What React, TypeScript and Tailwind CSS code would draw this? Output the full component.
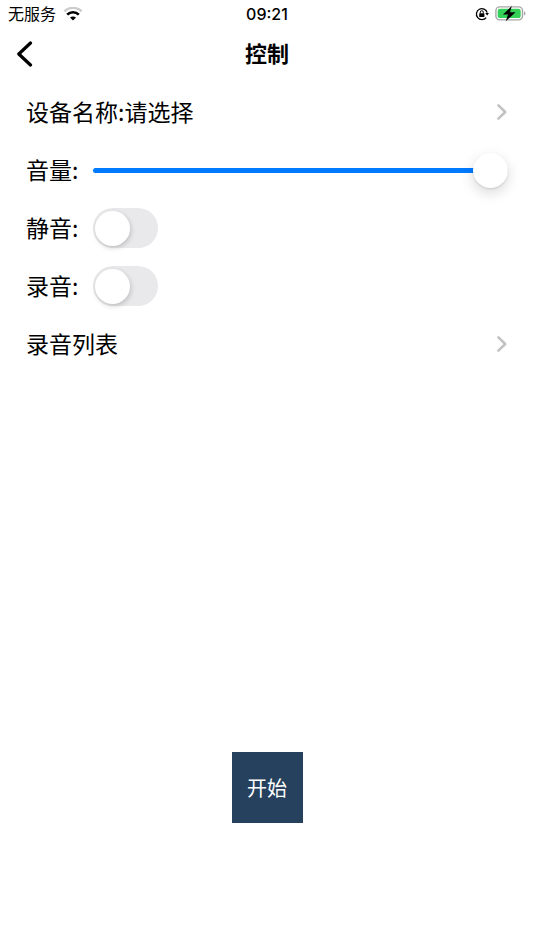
import { useState } from 'react';
import type { ReactNode } from 'react';

function StatusBar() {
  return (
    <div className="grid h-7 grid-cols-3 items-center px-2">
      <div className="flex items-center gap-[7px]">
        <span className="pb-[2px] text-[16px] leading-6">无服务</span>
        <svg width="20" height="14" viewBox="0 0 20 14" fill="none" aria-label="Wi-Fi">
          <path d="M1.3 4.4C6 -0.3 14 -0.3 18.7 4.4" stroke="#cccccc" strokeWidth="2.4" />
          <path d="M4.2 7.6C7.4 4.4 12.6 4.4 15.8 7.6" stroke="#000" strokeWidth="2.6" />
          <path d="M10 13.5L7 10.5C8.6 9 11.4 9 13 10.5Z" fill="#000" />
        </svg>
      </div>
      <time className="text-center font-[Inter] text-[16px] font-medium leading-6">09:21</time>
      <div className="flex items-center justify-end gap-[6px]">
        <svg width="14" height="14" viewBox="0 0 14 14" fill="none" aria-label="Orientation lock">
          <path d="M11.2 10.6A5.5 5.5 0 1 1 12.2 5.6" stroke="#000" strokeWidth="1.3" />
          <path d="M10.2 6H14L12.2 8.6Z" fill="#000" />
          <rect x="4.2" y="6.3" width="5.2" height="3.8" rx="0.6" fill="#000" />
          <path d="M5.3 6.5V5.2A1.5 1.5 0 0 1 8.3 5.2V6.5" stroke="#000" strokeWidth="1" />
        </svg>
        <svg width="31" height="16" viewBox="0 0 31 16" fill="none" aria-label="Battery charging">
          <rect x="0.9" y="0.9" width="26.6" height="13" rx="3.8" stroke="#a6a6a6" strokeWidth="1.4" />
          <rect x="2.7" y="2.7" width="23" height="9.4" rx="2.2" fill="#34d158" />
          <path d="M29 5.2C30.9 5.9 30.9 8.9 29 9.6Z" fill="#a6a6a6" />
          <path d="M16.8 0L8 8.6H13L10.8 15.2L20.6 6.2H15Z" fill="#000" />
        </svg>
      </div>
    </div>
  );
}

function Chevron() {
  return (
    <svg width="12" height="18" viewBox="0 0 12 18" fill="none" aria-hidden="true">
      <path d="M2.4 2.4L9.2 9L2.4 15.6" stroke="#c2c2c2" strokeWidth="2.6" strokeLinecap="round" strokeLinejoin="round" />
    </svg>
  );
}

function LinkRow({ children }: { children: ReactNode }) {
  return (
    <a href="#" className="flex h-[58px] items-center justify-between">
      <span className="pb-[3px]">{children}</span>
      <Chevron />
    </a>
  );
}

function SwitchRow({ id, label }: { id: string; label: string }) {
  const [on, setOn] = useState(false);

  return (
    <div className="flex h-[58px] items-center">
      <label htmlFor={id} className="w-[67px] shrink-0 pb-[3px]">{label}</label>
      <input
        id={id}
        type="checkbox"
        role="switch"
        checked={on}
        onChange={e => setOn(e.target.checked)}
        className="flex h-10 w-[65px] appearance-none items-center rounded-full bg-[#e9e9eb] px-[2px] before:size-[35px] before:rounded-full before:bg-white before:shadow-[1px_2px_5px_rgba(0,0,0,0.18)] before:content-[''] checked:justify-end checked:bg-[#007aff]"
      />
    </div>
  );
}

export default function App() {
  const [volume, setVolume] = useState(100);

  return (
    <div className="flex min-h-screen flex-col bg-white font-['Noto_Sans_CJK_SC',sans-serif] text-black">
      <StatusBar />

      {/* Title bar */}
      <header className="grid h-[51px] grid-cols-[1fr_auto_1fr] items-center px-4">
        <button type="button" aria-label="返回" className="justify-self-start">
          <svg width="18" height="26" viewBox="0 0 18 26" fill="none">
            <path d="M14.5 2L2.8 13L14.5 24" stroke="#000" strokeWidth="3.2" strokeLinecap="round" strokeLinejoin="round" />
          </svg>
        </button>
        <h1 className="pb-[3px] text-[22px] font-bold leading-8">控制</h1>
      </header>

      <main className="flex flex-1 flex-col pl-[26px] pr-[26px] pt-1 text-[23px] leading-8">
        <LinkRow>设备名称:请选择</LinkRow>

        <div className="flex h-[58px] items-center">
          <label htmlFor="volume" className="w-[67px] shrink-0 pb-[3px]">音量:</label>
          <input
            id="volume"
            type="range"
            min={0}
            max={100}
            value={volume}
            onChange={e => setVolume(Number(e.target.value))}
            className="h-9 min-w-0 flex-1 appearance-none bg-transparent [&::-webkit-slider-runnable-track]:h-[5px] [&::-webkit-slider-runnable-track]:rounded-full [&::-webkit-slider-runnable-track]:bg-[#007aff] [&::-webkit-slider-thumb]:-mt-[15px] [&::-webkit-slider-thumb]:size-[35px] [&::-webkit-slider-thumb]:appearance-none [&::-webkit-slider-thumb]:rounded-full [&::-webkit-slider-thumb]:bg-white [&::-webkit-slider-thumb]:shadow-[0_5px_14px_rgba(0,0,0,0.15),0_1px_2px_rgba(0,0,0,0.12)]"
          />
        </div>

        <SwitchRow id="mute" label="静音:" />
        <SwitchRow id="record" label="录音:" />
        <LinkRow>录音列表</LinkRow>

        <button type="button" className="mb-[127px] mt-auto size-[71px] self-center bg-[#25415d] text-[20px] text-white">
          开始
        </button>
      </main>
    </div>
  );
}
